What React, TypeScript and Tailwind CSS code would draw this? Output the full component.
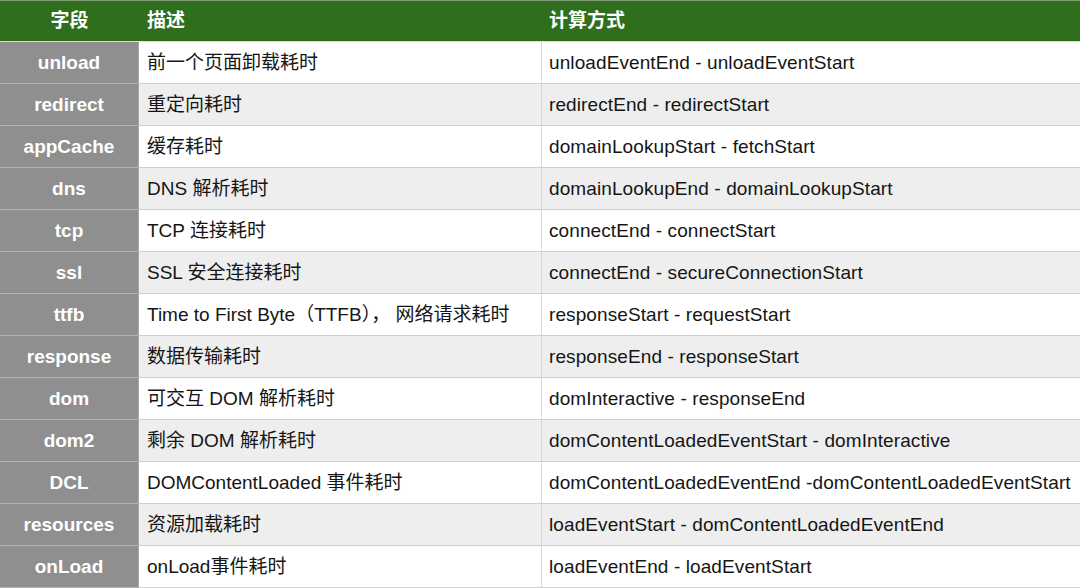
const rows: [string, string, string][] = [
	["unload", "前一个页面卸载耗时", "unloadEventEnd - unloadEventStart"],
	["redirect", "重定向耗时", "redirectEnd - redirectStart"],
	["appCache", "缓存耗时", "domainLookupStart - fetchStart"],
	["dns", "DNS 解析耗时", "domainLookupEnd - domainLookupStart"],
	["tcp", "TCP 连接耗时", "connectEnd - connectStart"],
	["ssl", "SSL 安全连接耗时", "connectEnd - secureConnectionStart"],
	["ttfb", "Time to First Byte（TTFB）， 网络请求耗时", "responseStart - requestStart"],
	["response", "数据传输耗时", "responseEnd - responseStart"],
	["dom", "可交互 DOM 解析耗时", "domInteractive - responseEnd"],
	["dom2", "剩余 DOM 解析耗时", "domContentLoadedEventStart - domInteractive"],
	["DCL", "DOMContentLoaded 事件耗时", "domContentLoadedEventEnd -domContentLoadedEventStart"],
	["resources", "资源加载耗时", "loadEventStart - domContentLoadedEventEnd"],
	["onLoad", "onLoad事件耗时", "loadEventEnd - loadEventStart"],
];

const font = { fontFamily: '"Liberation Sans", Arial, "Noto Sans CJK SC", sans-serif' };

export default function App() {
	return (
		<div className="w-[1080px] h-[588px] overflow-hidden bg-white text-[19px]" style={font}>
			<div className="grid grid-cols-[139px_403px_1fr] h-[42px] bg-[#2e6e1c] text-white border-t border-[#7f9a74] border-b border-b-[#d6e0d0]">
				<div className="flex items-center justify-center pt-px font-bold">字段</div>
				<div className="flex items-center pl-2 pt-px font-bold">描述</div>
				<div className="flex items-center pl-[7px] pt-px font-bold">计算方式</div>
			</div>
			{rows.map(([key, desc, calc], i) => (
				<div
					key={key}
					className={
						"grid grid-cols-[139px_403px_1fr] h-[42px] " +
						(i % 2 === 0 ? "bg-white" : "bg-[#eeeeee]")
					}
				>
					<div className="flex items-center justify-center pt-px bg-[#8f8f8f] text-white font-bold border-b border-[#b4b4b4] border-r border-r-[#a8a8a8]">
						{key}
					</div>
					<div className="flex items-center pl-2 pt-px text-[#151515] border-b border-[#cfcfcf] border-r border-r-[#d8d8d8] whitespace-nowrap">
						{desc}
					</div>
					<div className="flex items-center pl-[7px] pt-px text-[#151515] border-b border-[#cfcfcf] whitespace-nowrap tracking-[0.1px]">
						{calc}
					</div>
				</div>
			))}
		</div>
	);
}
